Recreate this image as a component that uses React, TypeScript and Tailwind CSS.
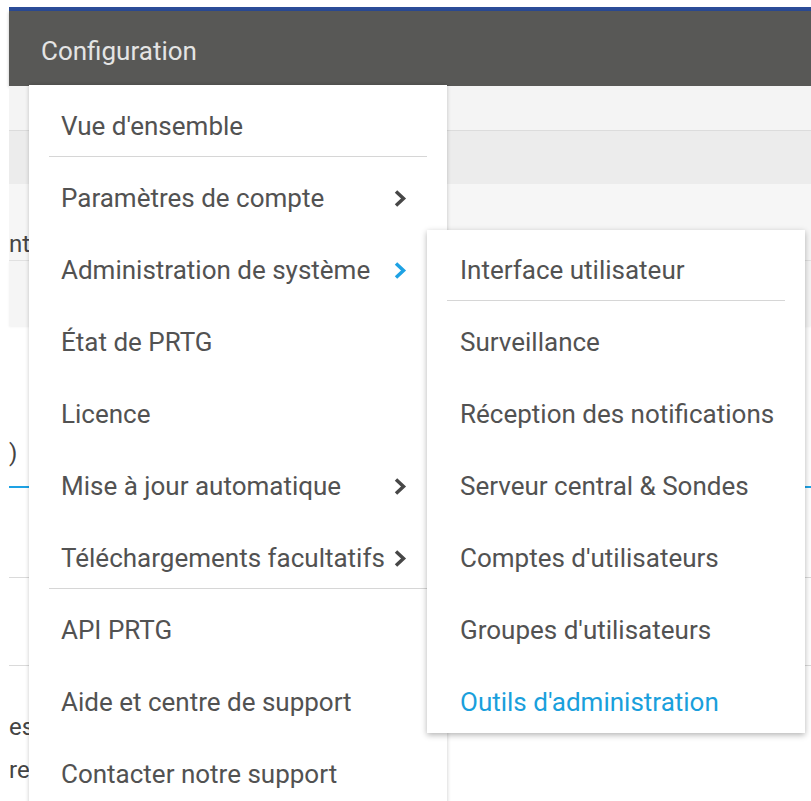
import React from "react";

type Item = {
  label: string;
  sub?: boolean;
  active?: boolean;
  divider?: boolean;
};

const mainItems: Item[] = [
  { label: "Vue d'ensemble", divider: true },
  { label: "Paramètres de compte", sub: true },
  { label: "Administration de système", sub: true, active: true },
  { label: "État de PRTG" },
  { label: "Licence" },
  { label: "Mise à jour automatique", sub: true },
  { label: "Téléchargements facultatifs", sub: true, divider: true },
  { label: "API PRTG" },
  { label: "Aide et centre de support" },
  { label: "Contacter notre support" },
];

const systemItems: Item[] = [
  { label: "Interface utilisateur", divider: true },
  { label: "Surveillance" },
  { label: "Réception des notifications" },
  { label: "Serveur central & Sondes" },
  { label: "Comptes d'utilisateurs" },
  { label: "Groupes d'utilisateurs" },
  { label: "Outils d'administration", active: true },
];

function Chevron({ active }: { active?: boolean }) {
  return (
    <svg width="14" height="19" viewBox="0 0 14 19" className="shrink-0">
      <path
        d="M3 2.5 L10.5 9.5 L3 16.5"
        fill="none"
        stroke={active ? "#1ea2e4" : "#474747"}
        strokeWidth="3.5"
      />
    </svg>
  );
}

function MenuRow({ item, showChevron, pl }: { item: Item; showChevron: boolean; pl: string }) {
  return (
    <>
      <div className={`flex h-[72px] items-center justify-between pr-[40px] ${pl}`}>
        <span
          className={`whitespace-nowrap text-[26px] leading-none ${
            item.active && !showChevron ? "text-[#1a9fdc]" : "text-[#525252]"
          }`}
        >
          {item.label}
        </span>
        {showChevron && item.sub && <Chevron active={item.active} />}
      </div>
      {item.divider && <div className="mx-5 -mt-[6px] mb-[5px] h-px bg-[#d6d6d6]" />}
    </>
  );
}

// what is left visible of the page's own labels beside the dropdown
function Tail({ text }: { text: string }) {
  return <span className="whitespace-nowrap text-[24px] leading-none text-[#444]">{text}</span>;
}

export default function App() {
  return (
    <div
      className="relative h-[801px] w-full overflow-hidden bg-white pl-[9px] pt-[7px]"
      style={{ fontFamily: "Roboto, 'Liberation Sans', sans-serif" }}
    >
      <div className="h-[4px] bg-[#2b4c98]" />
      <header className="flex h-[75px] items-center bg-[#585856] pl-[32px] pt-[4px] shadow-[0_1px_3px_rgba(0,0,0,0.25)]">
        <span className="text-[26px] leading-none text-[#e4e4e4]">Configuration</span>
      </header>

      <div className="h-[45px] border-b border-[#dcdcdc] bg-[#f4f4f4]" />
      <div className="h-[53px] bg-[#ececec]" />
      <div className="flex h-[77px] items-end border-b border-[#e2e2e2] bg-[#f6f6f6] pb-[4px]">
        <Tail text="nt" />
      </div>
      <div className="h-[65px] bg-[#f5f5f5] shadow-[0_1px_2px_rgba(0,0,0,0.06)]" />

      <div className="flex h-[160px] items-end pb-[21px]">
        <Tail text=")" />
      </div>
      <div className="h-[2px] bg-[#1ea2e4]" />
      <div className="h-[89px]" />
      <div className="h-px bg-[#dadada]" />
      <div className="h-[87px]" />
      <div className="h-px bg-[#dadada]" />
      <div className="flex h-[76px] items-end pb-[3px]">
        <Tail text="es" />
      </div>
      <div className="flex h-[56px] items-center">
        <Tail text="re:" />
      </div>

      {/* Configuration dropdown */}
      <div className="absolute left-[29px] top-[85px] h-[740px] w-[418px] bg-white pt-[5px] shadow-[0_0_4px_rgba(0,0,0,0.22)]">
        {mainItems.map((it) => (
          <MenuRow key={it.label} item={it} showChevron pl="pl-[32px]" />
        ))}
      </div>

      {/* Administration de système flyout */}
      <div className="absolute left-[427px] top-[230px] h-[503px] w-[378px] overflow-hidden bg-white pt-[4px] shadow-[0_2px_6px_rgba(0,0,0,0.3)]">
        {systemItems.map((it) => (
          <MenuRow key={it.label} item={it} showChevron={false} pl="pl-[33px]" />
        ))}
      </div>
    </div>
  );
}
